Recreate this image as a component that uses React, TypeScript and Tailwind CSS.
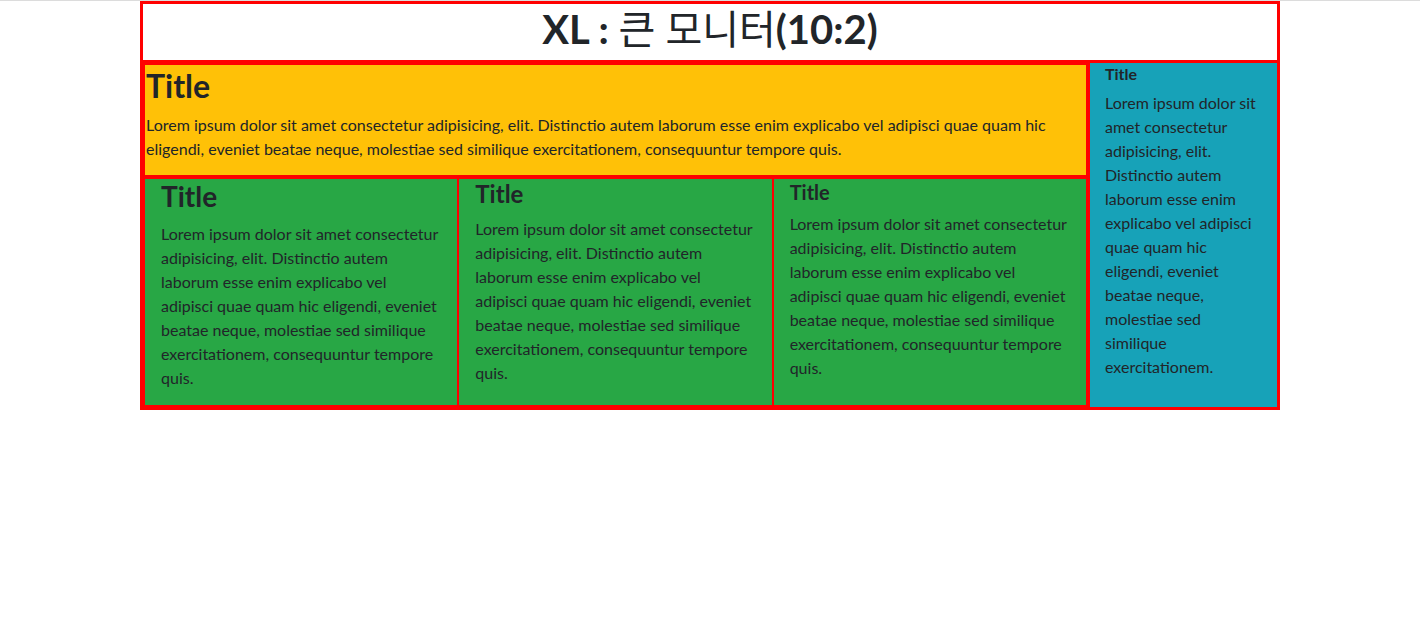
const lorem =
  'Lorem ipsum dolor sit amet consectetur adipisicing, elit. Distinctio autem laborum esse enim explicabo vel adipisci quae quam hic eligendi, eveniet beatae neque, molestiae sed similique exercitationem, consequuntur tempore quis.';
const shortLorem =
  'Lorem ipsum dolor sit amet consectetur adipisicing, elit. Distinctio autem laborum esse enim explicabo vel adipisci quae quam hic eligendi, eveniet beatae neque, molestiae sed similique exercitationem.';

const greenCols = [
  { size: 'text-[28px]', border: '' },
  { size: 'text-[24px]', border: 'border-l-2 border-[#ff0000]' },
  { size: 'text-[20px]', border: 'border-l-2 border-[#ff0000]' },
];

export default function App() {
  return (
    <div className="min-h-screen bg-white font-['Lato','Noto_Sans_CJK_KR',sans-serif] text-[16px] leading-6 text-[#212529]">
      <div className="h-px bg-[#dcdcdc]" />
      <div className="mx-auto w-[1140px]">
        <header className="border-[3px] border-[#ff0000] text-center">
          <h1 className="mb-[7px] pt-px text-[40px] leading-[1.2] font-bold">
            XL : <span className="font-normal">큰 모니터</span>(10:2)
          </h1>
        </header>

        <div className="flex border-[3px] border-t-0 border-[#ff0000]">
          <div className="flex w-[945px] flex-col">
            <section className="border-2 border-[#ff0000] bg-[#ffc107] pl-px">
              <h2 className="mb-1.5 pt-0.5 text-[32px] leading-[1.2] font-bold">Title</h2>
              <p className="mb-[14px] pt-0.5">{lorem}</p>
            </section>
            <div className="flex flex-1 border-2 border-[#ff0000] bg-[#28a745]">
              {greenCols.map((c, i) => (
                <div key={i} className={`flex-1 basis-0 px-4 ${c.border}`}>
                  <h3 className={`mb-[7px] pt-px leading-[1.2] font-bold ${c.size}`}>Title</h3>
                  <p className="mb-[15px] pt-px">{lorem}</p>
                </div>
              ))}
            </div>
          </div>
          <aside className="w-[189px] border-l-2 border-[#ff0000] bg-[#17a2b8] px-[15px]">
            <h6 className="mb-[7px] pt-px text-[16px] leading-[1.2] font-bold">Title</h6>
            <p className="mb-[15px] pt-px">{shortLorem}</p>
          </aside>
        </div>
      </div>
    </div>
  );
}
